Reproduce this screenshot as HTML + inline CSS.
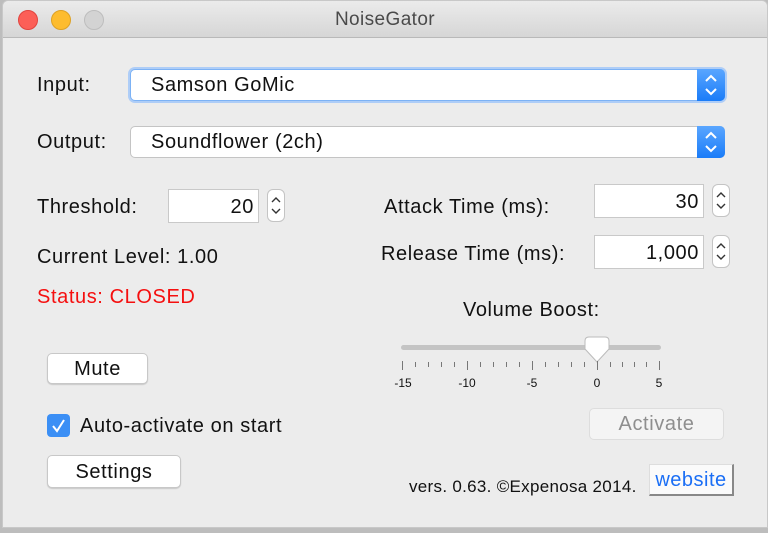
<!DOCTYPE html>
<html><head><style>
*{margin:0;padding:0;box-sizing:border-box}
body{width:768px;height:533px;background:#bdbdbd;font-family:"Liberation Sans",sans-serif;position:relative;overflow:hidden;color:#111}
.win{position:absolute;left:2px;top:0;width:766px;height:528px;background:#ececec;border-radius:6px 6px 0 0;border:1px solid #c8c8c8}
.title{position:absolute;left:0;top:0;right:0;height:37px;background:linear-gradient(#ebebeb,#d6d6d6);border-bottom:1px solid #b9b9b9;border-radius:6px 6px 0 0;text-align:center;font-size:19px;line-height:37px;color:#4a4a4a;letter-spacing:.4px}
.dot{position:absolute;top:9px;width:20px;height:20px;border-radius:50%}
.a{position:absolute;white-space:nowrap}
.lbl{font-size:20px;letter-spacing:.6px}
.combo{position:absolute;height:32px;background:#fff;border:1px solid #c4c4c4;border-radius:5px;font-size:20px;letter-spacing:.6px;line-height:31px;padding-left:20px}
.combo .arr{position:absolute;right:-1px;top:-1px;width:28px;height:32px;background:linear-gradient(#5aa6ff,#1a7cf8);border-radius:0 5px 5px 0}
.field{position:absolute;height:34px;background:#fff;border:1px solid #c9c9c9;font-size:20px;letter-spacing:.6px;line-height:34px;text-align:right;padding-right:4px}
.spin{position:absolute;width:18px;height:33px;background:#fff;border:1px solid #c4c4c4;border-radius:6px}
.btn{position:absolute;background:#fff;border:1px solid #c8c8c8;border-radius:5px;font-size:20px;letter-spacing:.6px;text-align:center;box-shadow:0 1px 1px rgba(0,0,0,.15)}
.tick{position:absolute;width:1px;background:#777}
.num{position:absolute;font-size:12px;top:376px;transform:translateX(-50%)}
</style></head><body>
<div class="win">
<div class="title">NoiseGator
<div class="dot" style="left:15px;background:#fc5f57;border:1px solid #e1443e"></div>
<div class="dot" style="left:48px;background:#fdbc2e;border:1px solid #dea123"></div>
<div class="dot" style="left:81px;background:#d3d3d3;border:1px solid #bdbdbd"></div>
</div>
</div>
<div class="a lbl" style="left:37px;top:74px">Input:</div>
<div class="combo" style="left:130px;top:69px;width:595px;border-color:#7cb2f5;box-shadow:0 0 0 2px #aecdf7">Samson GoMic<div class="arr"><svg width="28" height="32"><path d="M9 12l5-5 5 5M9 20l5 5 5-5" stroke="#fff" stroke-width="2" fill="none"/></svg></div></div>
<div class="a lbl" style="left:37px;top:131px">Output:</div>
<div class="combo" style="left:130px;top:126px;width:595px">Soundflower (2ch)<div class="arr"><svg width="28" height="32"><path d="M9 12l5-5 5 5M9 20l5 5 5-5" stroke="#fff" stroke-width="2" fill="none"/></svg></div></div>

<div class="a lbl" style="left:37px;top:196px">Threshold:</div>
<div class="field" style="left:168px;top:189px;width:91px">20</div>
<div class="spin" style="left:267px;top:189px"><svg width="16" height="31"><path d="M4 12l4-4 4 4M4 19l4 4 4-4" stroke="#333" stroke-width="1.4" fill="none"/></svg></div>
<div class="a lbl" style="left:37px;top:246px">Current Level: 1.00</div>
<div class="a lbl" style="left:37px;top:286px;color:#f50f0f">Status: CLOSED</div>

<div class="a lbl" style="left:384px;top:196px">Attack Time (ms):</div>
<div class="field" style="left:594px;top:184px;width:110px">30</div>
<div class="spin" style="left:712px;top:184px"><svg width="16" height="31"><path d="M4 12l4-4 4 4M4 19l4 4 4-4" stroke="#333" stroke-width="1.4" fill="none"/></svg></div>
<div class="a lbl" style="left:381px;top:243px">Release Time (ms):</div>
<div class="field" style="left:594px;top:235px;width:110px">1,000</div>
<div class="spin" style="left:712px;top:235px"><svg width="16" height="31"><path d="M4 12l4-4 4 4M4 19l4 4 4-4" stroke="#333" stroke-width="1.4" fill="none"/></svg></div>

<div class="a lbl" style="left:463px;top:299px">Volume Boost:</div>
<div class="a" style="left:401px;top:345px;width:260px;height:5px;background:#c4c4c4;border-radius:3px"></div>
<svg class="a" style="left:583px;top:336px" width="28" height="30"><path d="M2 5q0-4 4-4h16q4 0 4 4v8l-12 13-12-13z" fill="#fff" stroke="#bbb"/></svg>
<div class="tick" style="left:402px;top:361px;height:9px"></div>
<div class="tick" style="left:467px;top:361px;height:9px"></div>
<div class="tick" style="left:532px;top:361px;height:9px"></div>
<div class="tick" style="left:597px;top:361px;height:9px"></div>
<div class="tick" style="left:659px;top:361px;height:9px"></div>
<div class="tick" style="left:415px;top:362px;height:5px"></div><div class="tick" style="left:428px;top:362px;height:5px"></div><div class="tick" style="left:441px;top:362px;height:5px"></div><div class="tick" style="left:454px;top:362px;height:5px"></div>
<div class="tick" style="left:480px;top:362px;height:5px"></div><div class="tick" style="left:493px;top:362px;height:5px"></div><div class="tick" style="left:506px;top:362px;height:5px"></div><div class="tick" style="left:519px;top:362px;height:5px"></div>
<div class="tick" style="left:545px;top:362px;height:5px"></div><div class="tick" style="left:558px;top:362px;height:5px"></div><div class="tick" style="left:571px;top:362px;height:5px"></div><div class="tick" style="left:584px;top:362px;height:5px"></div>
<div class="tick" style="left:610px;top:362px;height:5px"></div><div class="tick" style="left:622px;top:362px;height:5px"></div><div class="tick" style="left:634px;top:362px;height:5px"></div><div class="tick" style="left:646px;top:362px;height:5px"></div>
<div class="num" style="left:403px">-15</div><div class="num" style="left:467px">-10</div><div class="num" style="left:532px">-5</div><div class="num" style="left:597px">0</div><div class="num" style="left:659px">5</div>

<div class="btn" style="left:47px;top:353px;width:101px;height:31px;line-height:30px">Mute</div>
<div class="a" style="left:47px;top:414px;width:23px;height:23px;background:#3b8ff5;border-radius:4px"><svg width="23" height="23"><path d="M6 12l4 5 7-11" stroke="#fff" stroke-width="2" fill="none"/></svg></div>
<div class="a lbl" style="left:80px;top:415px">Auto-activate on start</div>
<div class="btn" style="left:47px;top:455px;width:134px;height:33px;line-height:32px">Settings</div>
<div class="btn" style="left:589px;top:408px;width:135px;height:32px;line-height:31px;color:#8e8e8e;background:#f4f4f4;border-color:#ddd;box-shadow:none">Activate</div>
<div class="a" style="left:409px;top:477px;font-size:17px;letter-spacing:.3px">vers. 0.63. ©Expenosa 2014.</div>
<div class="a" style="left:649px;top:464px;width:85px;height:32px;background:#fafafa;border:1px solid #ddd;border-right:2px solid #888;border-bottom:2px solid #888;color:#1a6ef5;font-size:20px;letter-spacing:.5px;line-height:30px;text-align:center">website</div>
</body></html>
